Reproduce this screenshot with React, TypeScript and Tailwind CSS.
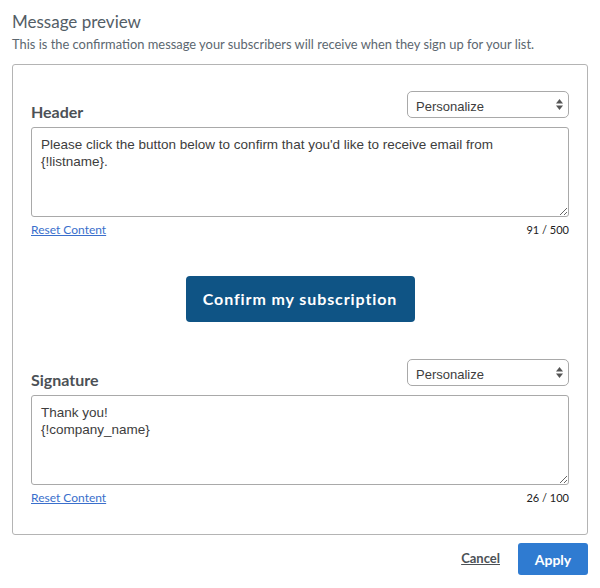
import { useState } from "react";

const headFont = { fontFamily: "Lato, 'Open Sans', sans-serif" };

const PersonalizeSelect = () => (
  <div className="relative h-[27px] w-[162px] rounded-[5px] border border-[#a9a9a9] bg-white">
    <span
      className="absolute left-[8px] top-[5px] text-[13px] text-[#3d3d3d]"
      style={{ fontFamily: "'Liberation Sans', Arial, sans-serif" }}>
      Personalize
    </span>
    <svg
      className="absolute right-[5px] top-[7px]"
      width="7"
      height="11"
      viewBox="0 0 7 11">
      <path d="M3.5 0 L7 4.5 L0 4.5 Z" fill="#555" />
      <path d="M3.5 11 L7 6.5 L0 6.5 Z" fill="#555" />
    </svg>
  </div>
);

const Section = ({
  label,
  value,
  max,
  mt,
}: {
  label: string;
  value: string;
  max: number;
  mt: string;
}) => {
  const [text, setText] = useState(value);
  return (
    <div className={mt}>
      <div className="flex items-end justify-between">
        <span
          className="relative top-[6px] text-[16px] font-bold text-[#4c5156]"
          style={headFont}>
          {label}
        </span>
        <PersonalizeSelect />
      </div>
      <textarea
        value={text}
        onChange={(e) => setText(e.target.value)}
        className="mt-[9px] block h-[90px] w-full resize-y rounded-[3px] border border-[#a9a9a9] px-[9px] py-[8px] text-[13.5px] leading-[17px] text-[#3d3d3d] outline-none"
        style={{ fontFamily: "'Liberation Sans', Arial, sans-serif" }}
      />
      <div className="mt-[4px] flex items-center justify-between" style={headFont}>
        <a href="#" className="text-[12px] text-[#3a6fcc] underline">
          Reset Content
        </a>
        <span className="text-[11px] text-[#222]">
          {text.length} / {max}
        </span>
      </div>
    </div>
  );
};

export default function App() {
  return (
    <div className="h-[588px] w-[600px] bg-white px-[12px] pt-[11px]" style={headFont}>
      <h2 className="text-[17px] leading-[22px] text-[#535d66]">Message preview</h2>
      <p className="mt-[3px] text-[12.9px] leading-[16px] text-[#5c6770]">
        This is the confirmation message your subscribers will receive when they sign up for your list.
      </p>

      <div className="mt-[12px] h-[471px] rounded-[3px] border border-[#b4b4b4] px-[18px] pt-[26px]">
        <Section
          label="Header"
          value={"Please click the button below to confirm that you'd like to receive email from {!listname}."}
          max={500}
          mt=""
        />

        <div className="mt-[37px] flex justify-center">
          <button className="h-[46px] w-[229px] rounded-[4px] bg-[#0f5485] text-[16px] font-bold tracking-[0.9px] text-white">
            Confirm my subscription
          </button>
        </div>

        <Section
          label="Signature"
          value={"Thank you!\n{!company_name}"}
          max={100}
          mt="mt-[37px]"
        />
      </div>

      <div className="mt-[8px] flex items-center justify-end gap-[18px]">
        <a href="#" className="text-[13px] font-bold text-[#4c5156] underline">
          Cancel
        </a>
        <button className="h-[32px] w-[70px] rounded-[3px] bg-[#2f7bd1] text-[14px] font-bold text-white">
          Apply
        </button>
      </div>
    </div>
  );
}
